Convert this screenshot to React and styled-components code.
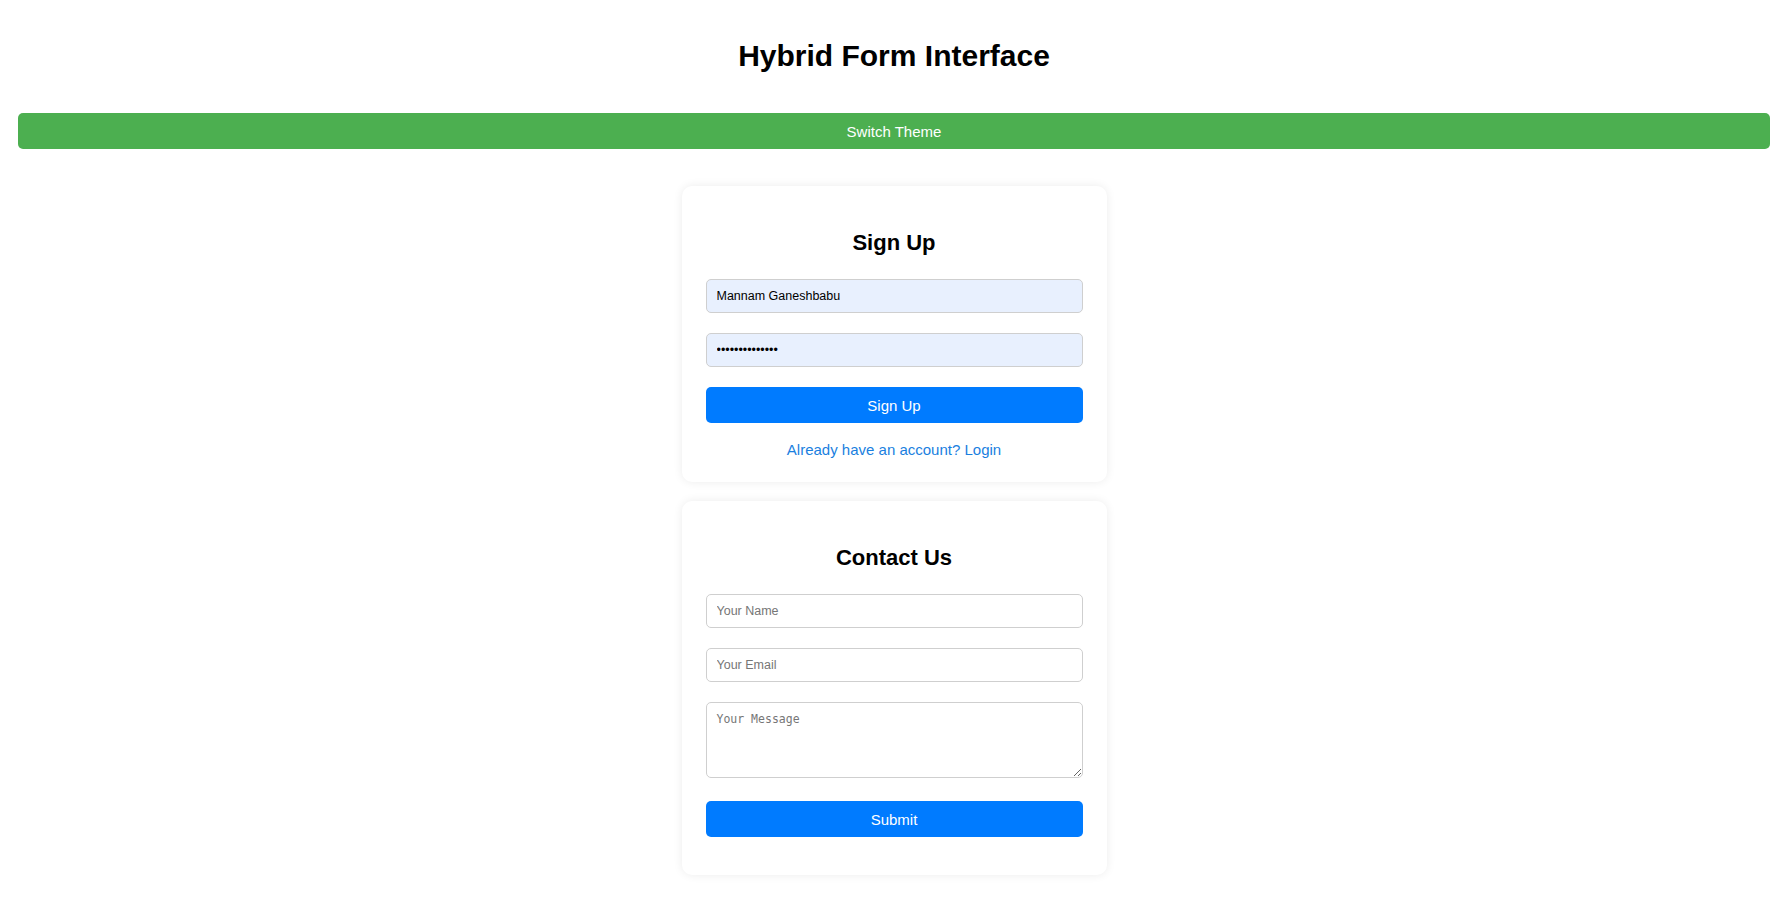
import styled, { createGlobalStyle } from "styled-components";

const GlobalStyle = createGlobalStyle`
body {
  margin: 0;
  background: #ffffff;
  font-family: "Liberation Sans", Arial, sans-serif;
  color: #000;
}
`

const Page = styled.div`
  padding: 0 18px 40px;
  display: flex;
  flex-direction: column;
  align-items: center;
`

const Title = styled.h1`
  margin: 39px 0 40px;
  font-size: 30px;
  line-height: 34px;
  font-weight: bold;
  text-align: center;
`

const ThemeButton = styled.button`
  align-self: stretch;
  height: 36px;
  border: none;
  border-radius: 5px;
  background-color: #4caf50;
  color: #fff;
  font-family: "Liberation Sans", Arial, sans-serif;
  font-size: 15px;
  cursor: pointer;
  margin-bottom: 37px;
`

const Card = styled.div`
  box-sizing: border-box;
  width: 425px;
  padding: 24px 24px ${(p) => p.$bottom || 24}px;
  margin-bottom: 19px;
  background: #fff;
  border-radius: 10px;
  box-shadow: 0 0 10px rgba(0, 0, 0, 0.08);
  display: flex;
  flex-direction: column;
`

const Heading = styled.h2`
  margin: 20px 0 24px;
  font-size: 22px;
  line-height: 25px;
  font-weight: bold;
  text-align: center;
`

const Field = styled.input`
  box-sizing: border-box;
  height: 34px;
  margin: 0 0 20px;
  padding: 0 10px;
  border: 1px solid #cfcfcf;
  border-radius: 5px;
  background: ${(p) => (p.$filled ? "#e8f0fe" : "#fff")};
  font-family: "Liberation Sans", Arial, sans-serif;
  font-size: 12.5px;
  color: #000;
  outline: none;

  &::placeholder {
    color: #767676;
  }
`

const Message = styled.textarea`
  box-sizing: border-box;
  height: 76px;
  margin: 0 0 23px;
  padding: 9px 10px;
  border: 1px solid #cfcfcf;
  border-radius: 5px;
  font-family: "DejaVu Sans Mono", monospace;
  font-size: 11.5px;
  resize: vertical;
  outline: none;

  &::placeholder {
    color: #767676;
  }
`

const PrimaryButton = styled.button`
  height: 36px;
  border: none;
  border-radius: 5px;
  background-color: #007bff;
  color: #fff;
  font-family: "Liberation Sans", Arial, sans-serif;
  font-size: 15px;
  cursor: pointer;
`

const SwitchLink = styled.p`
  margin: 18px 0 0;
  font-size: 15px;
  line-height: 17px;
  text-align: center;
  color: #1a7fe0;
  cursor: pointer;
`

const App = () => {
  return (
    <Page>
      <GlobalStyle />
      <Title>Hybrid Form Interface</Title>
      <ThemeButton>Switch Theme</ThemeButton>

      <Card>
        <Heading>Sign Up</Heading>
        <Field $filled type="text" defaultValue="Mannam Ganeshbabu" />
        <Field $filled type="password" defaultValue="ganeshbabu1234" />
        <PrimaryButton>Sign Up</PrimaryButton>
        <SwitchLink>Already have an account? Login</SwitchLink>
      </Card>

      <Card $bottom={38}>
        <Heading>Contact Us</Heading>
        <Field type="text" placeholder="Your Name" />
        <Field type="email" placeholder="Your Email" />
        <Message placeholder="Your Message" />
        <PrimaryButton>Submit</PrimaryButton>
      </Card>
    </Page>
  )
}

export default App
